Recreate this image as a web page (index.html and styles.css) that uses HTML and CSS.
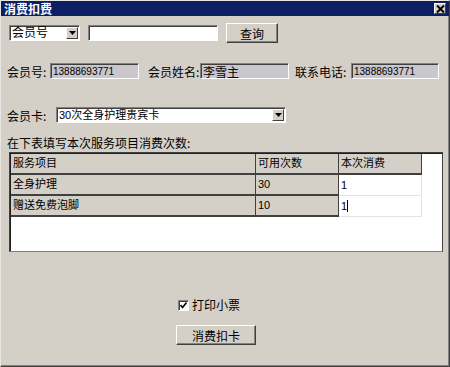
FILE: index.html
```html
<!DOCTYPE html>
<html lang="zh-CN">
<head>
    <meta charset="UTF-8">
    <title>消费扣费</title>
    <link rel="stylesheet" href="styles.css">
</head>
<body>
    <div class="window">
        <div class="titlebar">
            <span class="title">消费扣费</span>
            <span class="close">
                <svg width="9" height="8" viewBox="0 0 9 8"><path d="M1 0.5 L8 7.5 M8 0.5 L1 7.5" stroke="#000" stroke-width="2"/></svg>
            </span>
        </div>
        <div class="content">
            <!-- search -->
            <div class="row row-search">
                <div class="combo combo-type">
                    <span class="combo-text">会员号</span>
                    <span class="combo-btn"><svg width="7" height="4" viewBox="0 0 7 4"><path d="M0 0 H7 L3.5 4 Z" fill="#000"/></svg></span>
                </div>
                <div class="field field-search"></div>
                <div class="btn btn-query">查询</div>
            </div>

            <!-- member info -->
            <div class="row row-info">
                <span class="label lbl-no">会员号:</span>
                <div class="field readonly f-no">13888693771</div>
                <span class="label lbl-name">会员姓名:</span>
                <div class="field readonly f-name">李雪主</div>
                <span class="label lbl-tel">联系电话:</span>
                <div class="field readonly f-tel">13888693771</div>
            </div>

            <!-- card -->
            <div class="row row-card">
                <span class="label">会员卡:</span>
                <div class="combo combo-card">
                    <span class="combo-text">30次全身护理贵宾卡</span>
                    <span class="combo-btn"><svg width="7" height="4" viewBox="0 0 7 4"><path d="M0 0 H7 L3.5 4 Z" fill="#000"/></svg></span>
                </div>
            </div>

            <div class="hint">在下表填写本次服务项目消费次数:</div>

            <div class="grid">
                <div class="grid-row head">
                    <div class="cell c-item">服务项目</div>
                    <div class="cell c-avail">可用次数</div>
                    <div class="cell c-use">本次消费</div>
                </div>
                <div class="grid-row">
                    <div class="cell c-item">全身护理</div>
                    <div class="cell c-avail">30</div>
                    <div class="cell c-use edit">1</div>
                </div>
                <div class="grid-row">
                    <div class="cell c-item">赠送免费泡脚</div>
                    <div class="cell c-avail">10</div>
                    <div class="cell c-use edit">1<span class="caret"></span></div>
                </div>
            </div>

            <div class="check-row">
                <span class="checkbox"><svg width="7" height="7" viewBox="0 0 7 7"><path d="M0.5 3 L2.5 5.5 L6.5 0.5" stroke="#000" stroke-width="1.6" fill="none"/></svg></span>
                <span class="check-label">打印小票</span>
            </div>

            <div class="action-row">
                <div class="btn btn-submit">消费扣卡</div>
            </div>
        </div>
    </div>
</body>
</html>
```

FILE: styles.css
```css
/* Page */
body {
    margin: 0;
    background: #d4d0c8;
    font-family: "Noto Sans CJK SC", "DejaVu Sans", sans-serif;
    font-size: 12px;
    color: #000;
}

/* Window frame */
.window {
    width: 450px;
    height: 367px;
    box-sizing: border-box;
    border: 1px solid;
    border-color: #e8e6e0 #404040 #404040 #e8e6e0;
    box-shadow: inset -1px -1px #808080;
    background: #d4d0c8;
}

.titlebar {
    height: 15px;
    background: #0c1f64;
    display: flex;
    align-items: center;
    justify-content: space-between;
    padding: 0 3px 0 3px;
}

.title {
    color: #fff;
    font-weight: bold;
    font-size: 12px;
    line-height: 15px;
}

.close {
    width: 12px;
    height: 11px;
    box-sizing: border-box;
    background: #d4d0c8;
    border: 1px solid;
    border-color: #fff #404040 #404040 #fff;
    display: flex;
    align-items: center;
    justify-content: center;
}

.content {
    padding: 0 0 0 2px;
}

.row {
    display: flex;
}

/* Sunken edit box */
.field {
    box-sizing: border-box;
    height: 16px;
    background: #fff;
    border: 1px solid;
    border-color: #808080 #fff #fff #808080;
    box-shadow: inset 1px 1px #404040;
    font-family: "Liberation Sans", "Noto Sans CJK SC", sans-serif;
    font-size: 10px;
    line-height: 13px;
    padding: 1px 0 0 2px;
    white-space: nowrap;
}

.readonly {
    background: #c9c6cc;
}

/* Combo box */
.combo {
    box-sizing: border-box;
    height: 16px;
    background: #fff;
    border: 1px solid;
    border-color: #808080 #fff #fff #808080;
    box-shadow: inset 1px 1px #404040;
    display: flex;
    justify-content: space-between;
    padding: 1px 1px 1px 2px;
}

.combo-text {
    font-size: 11px;
    line-height: 13px;
    font-family: "Liberation Sans", "Noto Sans CJK SC", sans-serif;
}

.combo-btn {
    width: 12px;
    height: 12px;
    box-sizing: border-box;
    background: #d4d0c8;
    border: 1px solid;
    border-color: #fff #404040 #404040 #fff;
    display: flex;
    align-items: center;
    justify-content: center;
}

/* Push button */
.btn {
    box-sizing: border-box;
    height: 20px;
    background: #d4d0c8;
    border: 1px solid;
    border-color: #fff #404040 #404040 #fff;
    box-shadow: inset -1px -1px #808080;
    display: flex;
    align-items: center;
    justify-content: center;
    font-size: 12px;
}

/* Search row */
.row-search {
    margin-top: 7px;
    align-items: center;
}

.combo-type {
    width: 71px;
    margin-left: 6px;
}

.combo-type .combo-text {
    font-size: 12px;
}

.field-search {
    width: 130px;
    margin-left: 8px;
}

.btn-query {
    width: 52px;
    margin-left: 8px;
}

/* Member info row */
.row-info {
    margin-top: 20px;
    align-items: flex-end;
}

.label {
    font-size: 12px;
    line-height: 14px;
    white-space: nowrap;
    flex-shrink: 0;
}

.lbl-no {
    margin-left: 4px;
    width: 43px;
}

.f-no {
    width: 89px;
}

.lbl-name {
    margin-left: 9px;
    width: 52px;
}

.f-name {
    width: 89px;
    font-size: 12px;
    line-height: 13px;
    font-family: "Noto Sans CJK SC", sans-serif;
}

.lbl-tel {
    margin-left: 6px;
    width: 56px;
}

.f-tel {
    width: 88px;
}

/* Card row */
.row-card {
    margin-top: 28px;
    align-items: flex-end;
}

.row-card .label {
    margin-left: 4px;
    width: 49px;
}

.combo-card {
    width: 230px;
}

.hint {
    margin: 12px 0 0 4px;
    font-size: 12px;
    line-height: 16px;
}

/* Service grid */
.grid {
    margin: 1px 0 0 6px;
    width: 434px;
    height: 100px;
    box-sizing: border-box;
    background: #fff;
    border: 1px solid;
    border-color: #404040 #404040 #808080 #404040;
    box-shadow: inset 1px 1px #202020;
    padding: 1px 0 0 1px;
}

.grid-row {
    display: flex;
    height: 21px;
}

.cell {
    box-sizing: border-box;
    height: 21px;
    background: #d4d0c8;
    border-right: 1px solid #404040;
    border-bottom: 2px solid #404040;
    font-family: "Liberation Sans", "Noto Sans CJK SC", sans-serif;
    font-size: 11px;
    line-height: 14px;
    padding: 2px 0 0 2px;
}

.c-item {
    width: 245px;
}

.c-avail {
    width: 83px;
}

.c-use {
    width: 83px;
}

.cell.edit {
    background: #fff;
    border-right: 1px solid #e4e4e4;
    border-bottom: 1px solid #e4e4e4;
    padding-top: 3px;
}

.caret {
    display: inline-block;
    width: 1px;
    height: 12px;
    background: #000;
    vertical-align: -2px;
}

/* Print checkbox */
.check-row {
    display: flex;
    align-items: center;
    margin: 46px 0 0 175px;
}

.checkbox {
    width: 11px;
    height: 11px;
    box-sizing: border-box;
    background: #fff;
    border: 1px solid;
    border-color: #808080 #fff #fff #808080;
    box-shadow: inset 1px 1px #404040;
    display: flex;
    align-items: center;
    justify-content: center;
}

.check-label {
    margin-left: 3px;
    font-size: 12px;
    line-height: 14px;
}

.action-row {
    display: flex;
    margin: 13px 0 0 173px;
}

.btn-submit {
    width: 80px;
}
```
